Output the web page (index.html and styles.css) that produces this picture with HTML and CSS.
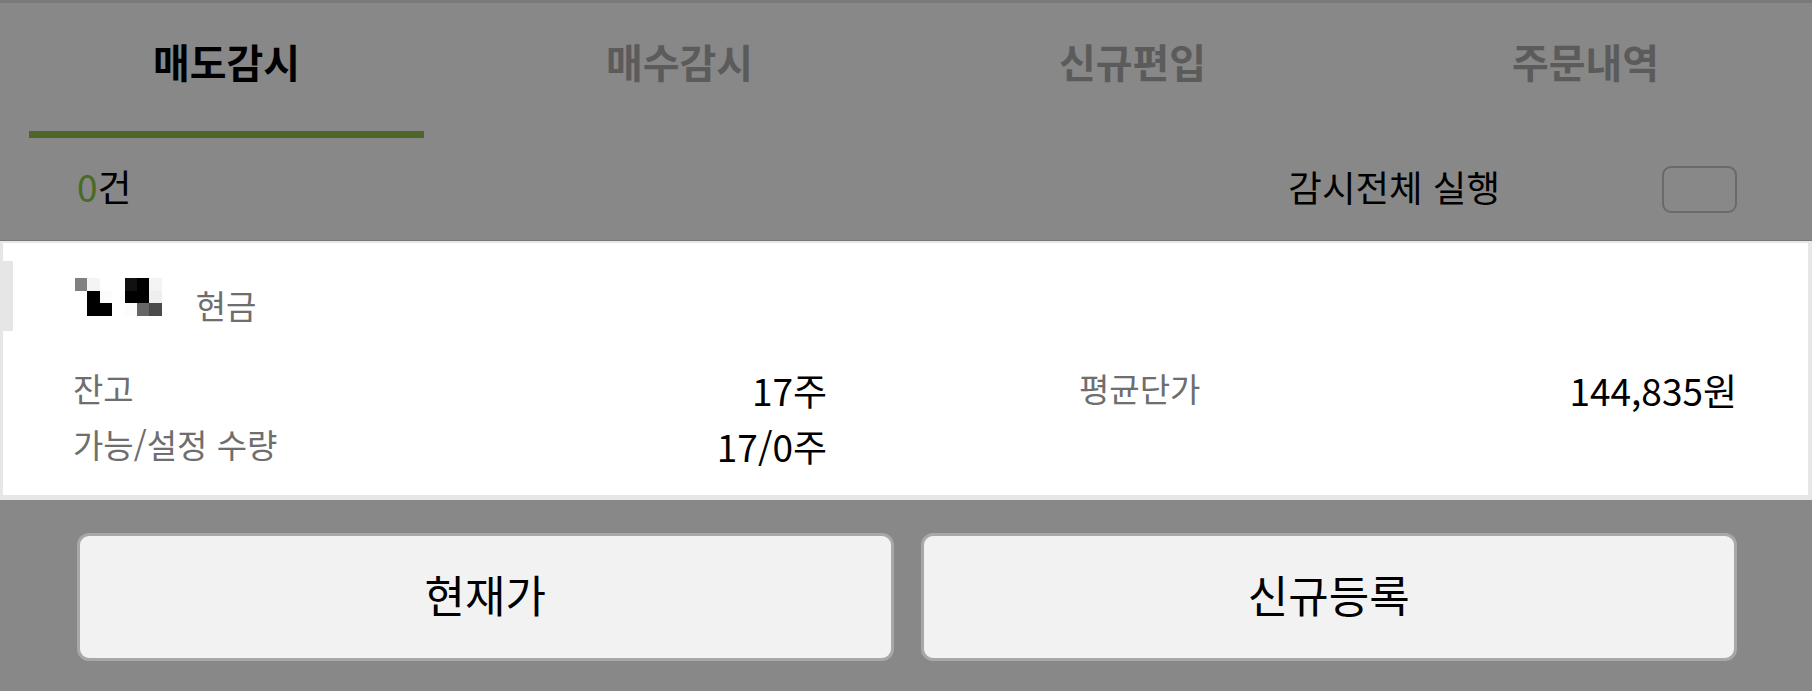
FILE: index.html
```html
<!DOCTYPE html>
<html lang="ko">
<head>
    <meta charset="UTF-8">
    <meta name="viewport" content="width=device-width, initial-scale=1.0">
    <title>감시</title>
    <link rel="stylesheet" href="styles.css">
</head>
<body>
    <div class="topline"></div>
    <div class="tabs">
        <div class="tab active"><span class="tab-label">매도감시</span><span class="tab-bar"></span></div>
        <div class="tab"><span class="tab-label">매수감시</span><span class="tab-bar"></span></div>
        <div class="tab"><span class="tab-label">신규편입</span><span class="tab-bar"></span></div>
        <div class="tab"><span class="tab-label">주문내역</span><span class="tab-bar"></span></div>
    </div>
    <div class="count-row">
        <div class="count"><span class="num">0</span>건</div>
        <div class="run-all">
            <span>감시전체 실행</span>
            <span class="check"></span>
        </div>
    </div>
    <div class="card">
        <span class="card-mark"></span>
        <div class="name-row">
            <div class="mosaic">
                <i class="c1"></i><i class="c2"></i><i></i><i></i><i class="c3"></i><i class="c4"></i><i class="c2"></i>
                <i></i><i class="c4"></i><i class="c5"></i><i></i><i class="c4"></i><i class="c4"></i><i class="c6"></i>
                <i></i><i class="c4"></i><i class="c4"></i><i></i><i class="c5"></i><i class="c7"></i><i class="c8"></i>
            </div>
            <span class="type">현금</span>
        </div>
        <div class="stats">
            <div class="col">
                <div class="stat"><span class="label">잔고</span><span class="value">17주</span></div>
                <div class="stat"><span class="label">가능/설정 수량</span><span class="value">17/0주</span></div>
            </div>
            <div class="col">
                <div class="stat"><span class="label">평균단가</span><span class="value">144,835원</span></div>
            </div>
        </div>
    </div>
    <div class="actions">
        <button class="btn">현재가</button>
        <button class="btn">신규등록</button>
    </div>
</body>
</html>
```

FILE: styles.css
```css
body {
    margin: 0;
    background: #888888;
    font-family: "Noto Sans CJK KR", "Noto Sans", sans-serif;
    color: #000;
    height: 691px;
    overflow: hidden;
}
.topline {
    height: 3px;
    background: #7a7a7a;
}
.tabs {
    display: grid;
    grid-template-columns: repeat(4, 1fr);
    height: 135px;
}
.tab {
    display: flex;
    flex-direction: column;
    align-items: center;
    padding-top: 33px;
}
.tab-label {
    font-size: 40px;
    font-weight: 700;
    line-height: 50px;
    color: #5b5b5b;
}
.tab-bar {
    margin-top: auto;
    align-self: stretch;
    height: 7px;
    margin-left: 29px;
    margin-right: 29px;
}
.tab.active .tab-label {
    color: #000;
}
.tab.active .tab-bar {
    background: #4e6629;
}
.count-row {
    display: flex;
    align-items: center;
    justify-content: space-between;
    height: 103px;
    padding: 0 75px 6px 77px;
    border-bottom: 1px solid #777;
    box-sizing: border-box;
}
.count {
    font-size: 37px;
}
.num {
    color: #4b6a26;
}
.run-all {
    display: flex;
    align-items: center;
    gap: 162px;
    font-size: 36.5px;
}
.check {
    width: 71px;
    height: 43px;
    border: 2px solid #6a6a6a;
    border-radius: 9px;
    margin-top: 6px;
}
.card {
    position: relative;
    background: #fff;
    border: 3px solid #e6e6e6;
    border-top-width: 2px;
    border-right-width: 4px;
    border-bottom-width: 5px;
    padding: 35px 71px 23px 70px;
}
.card-mark {
    position: absolute;
    left: -3px;
    top: 18px;
    width: 13px;
    height: 70px;
    background: #e6e6e6;
}
.name-row {
    display: flex;
    align-items: center;
    height: 38px;
    gap: 34px;
}
.mosaic {
    display: grid;
    grid-template-columns: repeat(7, 12.4px);
    grid-auto-rows: 12.6px;
    margin-left: 2px;
}
.mosaic i { background: #fff; }
.mosaic .c1 { background: #808080; }
.mosaic .c2 { background: #f4f4f4; }
.mosaic .c3 { background: #111; }
.mosaic .c4 { background: #000; }
.mosaic .c5 { background: #fcfcfc; }
.mosaic .c6 { background: #eee; }
.mosaic .c7 { background: #666; }
.mosaic .c8 { background: #4a4a4a; }
.type {
    font-size: 33px;
    color: #6e6e6e;
    padding-top: 16px;
}
.stats {
    display: grid;
    grid-template-columns: 754px 1fr;
    column-gap: 252px;
    margin-top: 44px;
}
.stat {
    display: flex;
    justify-content: space-between;
    align-items: center;
    height: 56px;
}
.label {
    font-size: 33px;
    color: #6e6e6e;
}
.value {
    font-size: 37px;
    padding-top: 3px;
}
.actions {
    display: flex;
    gap: 27px;
    padding: 33px 75px 0 77px;
}
.btn {
    flex: 1;
    height: 128px;
    padding-bottom: 7px;
    background: #f2f2f2;
    border: 3px solid #a8a8a8;
    border-radius: 12px;
    font-family: inherit;
    font-size: 44px;
    color: #000;
}
```
